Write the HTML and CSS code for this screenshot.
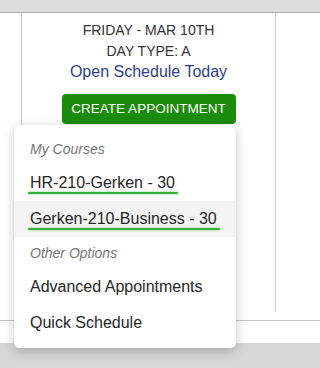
FILE: index.html
```html
<!DOCTYPE html>
<html>
<head>
<meta charset="utf-8">
<link rel="stylesheet" href="styles.css">
</head>
<body>
<div class="page">
  <div class="topbar"></div>
  <div class="row">
    <div class="side"></div>
    <div class="cell">
      <div class="day">FRIDAY - MAR 10TH</div>
      <div class="day">DAY TYPE: A</div>
      <a class="open">Open Schedule Today</a>
      <div class="btn">CREATE APPOINTMENT</div>
    </div>
    <div class="side side-right"></div>
  </div>
  <div class="gap"></div>
  <div class="hr"></div>
  <div class="white"></div>
  <div class="bottom"></div>

  <div class="menu">
    <div class="header">My Courses</div>
    <div class="item"><span class="ul">HR-210-Gerken - 30</span></div>
    <div class="item active"><span class="ul">Gerken-210-Business - 30</span></div>
    <div class="header">Other Options</div>
    <div class="item">Advanced Appointments</div>
    <div class="item">Quick Schedule</div>
  </div>
</div>
</body>
</html>
```
FILE: styles.css
```css
html, body {
  margin: 0;
  padding: 0;
}
body {
  height: 368px;
  overflow: hidden;
  font-family: "Liberation Sans", Arial, sans-serif;
  color: #333;
  background: #fff;
}
.page {
  position: relative;
  display: flex;
  flex-direction: column;
  height: 368px;
}
.topbar {
  height: 12px;
  background: #dcdcdc;
  border-bottom: 1px solid #b4b4b4;
  flex: none;
}
.row {
  display: flex;
  height: 299px;
  flex: none;
}
.side {
  width: 21px;
  flex: none;
}
.side-right {
  flex: 1;
}
.cell {
  width: 253px;
  flex: none;
  border-left: 1px solid #cfcfcf;
  border-right: 1px solid #cfcfcf;
  display: flex;
  flex-direction: column;
  align-items: center;
  padding-top: 7px;
}
.day {
  font-size: 14px;
  line-height: 21px;
  color: #333;
}
.open {
  font-size: 16px;
  line-height: 20px;
  color: #2c3f91;
}
.btn {
  margin-top: 12px;
  height: 30px;
  width: 174px;
  box-sizing: border-box;
  background: #1a8c0a;
  color: #fff;
  border-radius: 4px;
  font-size: 13.5px;
  line-height: 30px;
  text-align: center;
}
.gap {
  height: 8px;
  flex: none;
}
.hr {
  height: 1px;
  background: #c4c4c4;
  flex: none;
}
.white {
  height: 22px;
  flex: none;
}
.bottom {
  flex: 1;
  background: #d7d7d7;
}
.menu {
  position: absolute;
  left: 14px;
  top: 125px;
  width: 222px;
  box-sizing: border-box;
  padding: 8px 0 7px;
  background: #fff;
  border-radius: 5px;
  box-shadow: 0 3px 12px rgba(0, 0, 0, 0.22), 0 0 2px rgba(0, 0, 0, 0.06);
}
.header {
  height: 32px;
  line-height: 32px;
  padding-left: 16px;
  font-size: 14px;
  font-style: italic;
  color: #777;
}
.item {
  height: 36px;
  line-height: 36px;
  padding-left: 16px;
  font-size: 16px;
  color: #262626;
}
.item.active {
  background: #f4f4f4;
}
.ul {
  position: relative;
  display: inline-block;
}
.ul::after {
  content: "";
  position: absolute;
  left: -2px;
  right: -3px;
  top: 27px;
  height: 2px;
  border-radius: 2px;
  background: #35b035;
  box-shadow: 0 0 2px rgba(40, 170, 40, 0.7);
}
```
